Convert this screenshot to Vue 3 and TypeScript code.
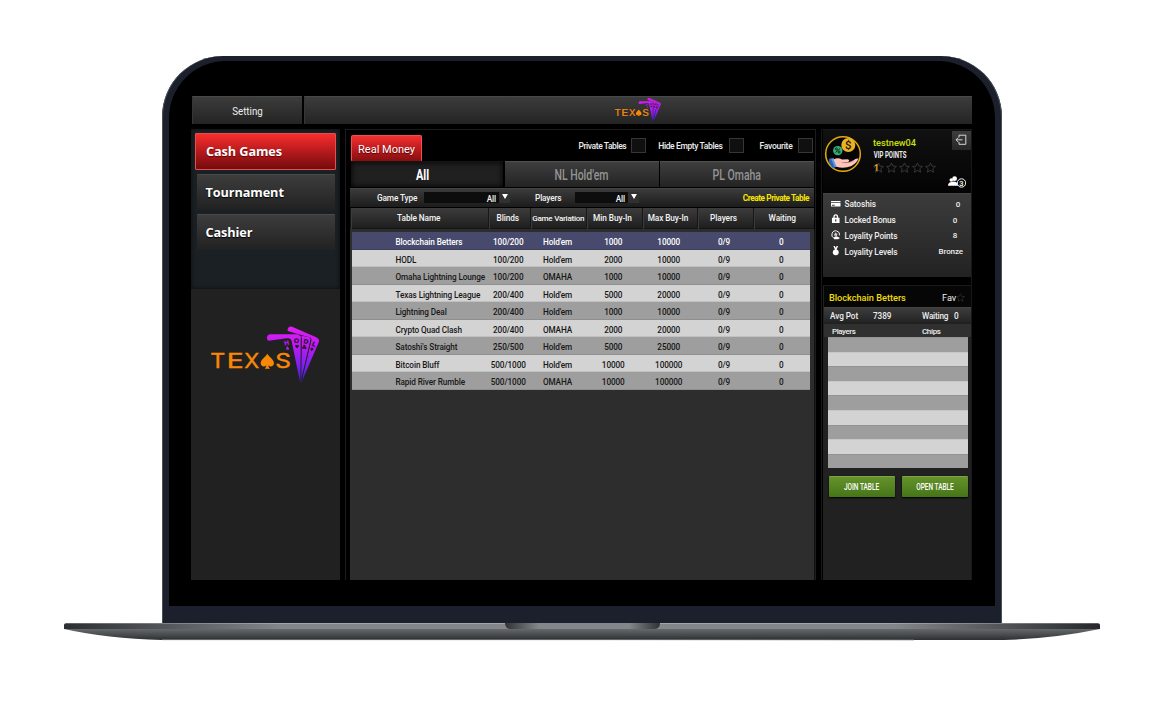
<script setup lang="ts">
interface PokerTable {
  name: string
  blinds: string
  variation: string
  min: string
  max: string
}

const tables: PokerTable[] = [
  { name: 'Blockchain Betters', blinds: '100/200', variation: "Hold'em", min: '1000', max: '10000' },
  { name: 'HODL', blinds: '100/200', variation: "Hold'em", min: '2000', max: '10000' },
  { name: 'Omaha Lightning Lounge', blinds: '100/200', variation: 'OMAHA', min: '1000', max: '10000' },
  { name: 'Texas Lightning League', blinds: '200/400', variation: "Hold'em", min: '5000', max: '20000' },
  { name: 'Lightning Deal', blinds: '200/400', variation: "Hold'em", min: '1000', max: '10000' },
  { name: 'Crypto Quad Clash', blinds: '200/400', variation: 'OMAHA', min: '2000', max: '20000' },
  { name: "Satoshi's Straight", blinds: '250/500', variation: "Hold'em", min: '5000', max: '25000' },
  { name: 'Bitcoin Bluff', blinds: '500/1000', variation: "Hold'em", min: '10000', max: '100000' },
  { name: 'Rapid River Rumble', blinds: '500/1000', variation: 'OMAHA', min: '10000', max: '100000' },
]
const headings: string[] = ['Table Name', 'Blinds', 'Game Variation', 'Min Buy-In', 'Max Buy-In', 'Players', 'Waiting']
const star = 'M5 .8 6.3 3.7 9.5 4 7.1 6.1 7.8 9.3 5 7.6 2.2 9.3 2.9 6.1 .5 4 3.7 3.7Z'
</script>

<template>
  <div class="stage">
    <svg class="defs" width="0" height="0" aria-hidden="true">
      <defs>
        <linearGradient id="cardFill" gradientUnits="userSpaceOnUse" x1="0" y1="35" x2="0" y2="205">
          <stop offset="0" stop-color="#e41cf6" />
          <stop offset=".35" stop-color="#bb1bf2" />
          <stop offset=".7" stop-color="#7a20ee" />
          <stop offset="1" stop-color="#3a1ad0" />
        </linearGradient>
        <symbol id="brand" viewBox="0 0 390 240">
          <g fill="#f88806" stroke="#f88806" stroke-width="1.2" font-family="Inter, sans-serif" font-size="60">
            <text x="31" y="159" textLength="45" lengthAdjust="spacingAndGlyphs">T</text>
            <text x="80" y="159" textLength="51" lengthAdjust="spacingAndGlyphs">E</text>
            <text x="133" y="159" textLength="45" lengthAdjust="spacingAndGlyphs">X</text>
            <text x="226" y="159" textLength="47" lengthAdjust="spacingAndGlyphs">S</text>
          </g>
          <path fill="#f88806" d="M202 116C208 127 222 133 222 145C222 154 211 158 205 151Q205 158 210 161H194Q199 158 199 151C193 158 182 154 182 145C182 133 196 127 202 116Z" />
          <g fill="url(#cardFill)">
            <path d="M201 66Q202 59 211 58L292 58Q304 61 304 72L301 205L275 79Q273 68 260 70L206 77Q200 76 201 66Z" />
            <path d="M262 45L266 37Q269 33 276 35L347 66Q359 71 357 80L303 205L334 74Q335 66 322 65L265 49Z" />
            <path d="M304 62L325 66Q333 68 331 77L302 203L306 72Z" />
            <path d="M303 70L303 200" stroke="#212121" stroke-width="2" />
            <path d="M262 93L266 99Q270 105 264 104H260Q256 102 262 93Z" />
          </g>
          <path d="M333 75L305 194" stroke="#212121" stroke-width="2.5" />
          <g font-family="'DejaVu Sans', sans-serif" font-size="19" font-weight="bold">
            <text x="251" y="90" fill="#b51be8" transform="rotate(-14 261 82)">H</text>
            <g fill="#241629">
              <text x="281" y="83">O</text>
              <text x="310" y="86" transform="rotate(10 318 78)">D</text>
              <text x="336" y="94" transform="rotate(22 342 86)">L</text>
              <path d="M291 100Q283 94 286 90Q290 88 291 92Q293 88 297 91Q298 95 291 100Z" />
              <circle cx="313" cy="93" r="3.5" /><circle cx="310" cy="98" r="3.5" /><circle cx="316" cy="99" r="3.5" />
              <path d="M336 97L341 102L335 109L331 102Z" />
            </g>
          </g>
        </symbol>
      </defs>
    </svg>

    <div class="lid">
      <div class="bezel">
        <div class="screen">
          <header class="topbar">
            <div class="setting"><span>Setting</span></div>
            <div class="brandbar"><svg class="logo-small"><use href="#brand" /></svg></div>
          </header>

          <main class="columns">
            <aside class="left">
              <nav class="nav">
                <div class="nav-item active">Cash Games</div>
                <div class="nav-item">Tournament</div>
                <div class="nav-item">Cashier</div>
              </nav>
              <svg class="logo-big"><use href="#brand" /></svg>
            </aside>

            <section class="centre">
              <div class="options">
                <div class="real">Real Money</div>
                <div class="checks">
                  <span class="check c1"><b>Private Tables</b><i></i></span>
                  <span class="check c2"><b>Hide Empty Tables</b><i></i></span>
                  <span class="check c3"><b>Favourite</b><i></i></span>
                </div>
              </div>
              <div class="tabs">
                <div class="tab on"><span>All</span></div>
                <div class="tab"><span>NL Hold'em</span></div>
                <div class="tab"><span>PL Omaha</span></div>
              </div>
              <div class="filters">
                <span class="flabel f1">Game Type</span>
                <span class="select s1"><em>All</em><i></i></span>
                <span class="flabel f2">Players</span>
                <span class="select s2"><em>All</em><i></i></span>
                <span class="create">Create Private Table</span>
              </div>
              <div class="thead">
                <div v-for="(h, i) in headings" :key="h" :class="['th', 'h' + i]">{{ h }}</div>
              </div>
              <div class="tbody">
                <div v-for="(t, i) in tables" :key="t.name" :class="['tr', { selected: i === 0, light: i % 2 === 1 }]">
                  <span class="name">{{ t.name }}</span>
                  <span>{{ t.blinds }}</span>
                  <span>{{ t.variation }}</span>
                  <span>{{ t.min }}</span>
                  <span>{{ t.max }}</span>
                  <span>0/9</span>
                  <span>0</span>
                </div>
              </div>
            </section>

            <aside class="right">
              <div class="profile">
                <svg class="avatar" viewBox="0 0 38 38">
                  <circle cx="19" cy="19" r="17.3" fill="#050505" stroke="#e3aa10" stroke-width="1.5" />
                  <path d="M5 24L9.5 23L13 31.5L9 33Q4 28 5 24Z" fill="#5299ed" />
                  <path d="M5 24L7 23.5L10.5 32L9 33Q4 28 5 24Z" fill="#2864bd" />
                  <path d="M9.5 24.5Q14 22 18 24.5L24 24.3Q26.5 25.7 24 27L20 27.5Q25 28 29 25.5Q32 23 34.5 23.5Q33 27.5 27.5 31Q20 34 12.5 31.8Z" fill="#ffc5bd" />
                  <path d="M18 27.6H23Q27 27.5 30 25.4" fill="none" stroke="#9d5f62" stroke-width=".6" />
                  <circle cx="13.8" cy="15.6" r="4.7" fill="#35ad76" />
                  <path d="M11.5 17.5L16 13.5" stroke="#11301f" stroke-width="1" />
                  <circle cx="12.4" cy="14" r="1" fill="none" stroke="#11301f" /><circle cx="15.1" cy="17" r="1" fill="none" stroke="#11301f" />
                  <circle cx="24.3" cy="10" r="7" fill="#eab225" />
                  <text x="24.3" y="14" text-anchor="middle" font-family="Roboto, sans-serif" font-size="11.5" font-weight="500" fill="#1d1908">$</text>
                </svg>
                <div class="who">
                  <div class="user">testnew04</div>
                  <div class="vip">VIP POINTS</div>
                  <div class="stars">
                    <svg v-for="n in 5" :key="n" viewBox="0 0 10 10"><path :d="star" fill="none" stroke="#3d3d3d" stroke-width=".8" /></svg>
                    <b>1</b>
                  </div>
                </div>
                <div class="side">
                  <div class="exit">
                    <svg viewBox="0 0 12 12"><path d="M4 3.5V1.2H10.8V10.3H4V8M1 5.8H7.5M3.2 3.7L1 5.8L3.2 8" fill="none" stroke="#d5d5d5" stroke-width="1" /></svg>
                  </div>
                  <svg class="people" viewBox="0 0 18 12">
                    <circle cx="6.6" cy="2.7" r="2.4" fill="#fff" /><circle cx="3.3" cy="4" r="1.8" fill="#fff" />
                    <path d="M0 9.8Q0 6 4 6L5 5.5Q10 5.5 10 9.8Z" fill="#fff" />
                    <circle cx="13.5" cy="7" r="4.2" fill="#0a0a0a" stroke="#f4f4f4" stroke-width="1" />
                    <text x="13.5" y="9.7" text-anchor="middle" font-family="Roboto, sans-serif" font-size="7.5" font-weight="500" fill="#fff">3</text>
                  </svg>
                </div>
              </div>

              <div class="stats">
                <div class="stat">
                  <svg viewBox="0 0 10 10"><path d="M0 2H10V3.3H0ZM0 4.3H10V8H0ZM1 6V7H4V6Z" fill="#fff" fill-rule="evenodd" /></svg>
                  <b>Satoshis</b><i>0</i>
                </div>
                <div class="stat">
                  <svg viewBox="0 0 10 10"><path d="M1 4H2.5V3Q2.5 .3 5 .3T7.5 3V4H9V9.6H1ZM3.9 4H6.1V3Q6.1 1.7 5 1.7T3.9 3ZM4.4 5.6V8H5.6V5.6Z" fill="#fff" fill-rule="evenodd" /></svg>
                  <b>Locked Bonus</b><i class="near">0</i>
                </div>
                <div class="stat">
                  <svg viewBox="0 0 10 10"><path d="M3 8.6A4.1 4.1 0 1 1 9 5.7" fill="none" stroke="#fff" stroke-width="1" /><path d="M5 2.2L5.8 4H7.4L6.2 5.1L6.6 6.7L5 5.8L3.4 6.7L3.8 5.1L2.6 4H4.2Z" fill="#ddd" /><path d="M3 8Q5 6 7 7L9.5 8.3L7.5 9.8H3Z" fill="#fff" /></svg>
                  <b>Loyality Points</b><i class="near">8</i>
                </div>
                <div class="stat">
                  <svg viewBox="0 0 10 10"><path d="M2.5 0H4L5 1.8L6 0H7.5L5.9 3.8Q8.2 4.6 8.2 6.7Q8 9.8 5 9.8T1.8 6.7Q1.8 4.6 4.1 3.8Z" fill="#fff" /></svg>
                  <b>Loyality Levels</b><i class="bronze">Bronze</i>
                </div>
              </div>

              <div class="detail">
                <div class="dtitle"><b>Blockchain Betters</b><span>Fav</span><svg viewBox="0 0 10 10"><path :d="star" fill="none" stroke="#303030" stroke-width=".8" /></svg></div>
                <div class="dinfo"><span class="avg">Avg Pot</span><span class="pot">7389</span><span class="wait">Waiting</span><span>0</span></div>
                <div class="dhead"><span>Players</span><span>Chips</span></div>
                <div class="slots"><div v-for="n in 9" :key="n" class="slot"></div></div>
                <div class="actions"><div><span>JOIN TABLE</span></div><div><span>OPEN TABLE</span></div></div>
              </div>
            </aside>
          </main>
        </div>
      </div>
    </div>

    <svg class="base" viewBox="0 0 1036 18">
      <defs>
        <linearGradient id="deck" x1="0" x2="1">
          <stop offset="0" stop-color="#2c2e32" /><stop offset=".06" stop-color="#44474b" />
          <stop offset=".21" stop-color="#83878b" /><stop offset=".8" stop-color="#83878b" />
          <stop offset=".93" stop-color="#464a4d" /><stop offset="1" stop-color="#27282c" />
        </linearGradient>
        <linearGradient id="under" x1="0" x2="0" y1="0" y2="1">
          <stop offset="0" stop-color="#65696c" /><stop offset=".5" stop-color="#4a4d50" /><stop offset="1" stop-color="#2d2f32" />
        </linearGradient>
        <linearGradient id="notch" x1="0" x2="1">
          <stop offset="0" stop-color="#303235" /><stop offset=".22" stop-color="#83878b" />
          <stop offset=".8" stop-color="#83878b" /><stop offset="1" stop-color="#303235" />
        </linearGradient>
      </defs>
      <path d="M0 6H1036Q990 15.5 940 17H98Q43 15.5 0 6Z" fill="url(#under)" />
      <path d="M98 16.7H540L850 17" stroke="#8b8f91" stroke-width=".7" fill="none" />
      <path d="M0 2Q0 .3 2 .3H1034Q1036 .3 1036 2V6H0Z" fill="url(#deck)" />
      <path d="M441 0H596Q596 6 590 6H447Q441 6 441 0Z" fill="url(#notch)" />
    </svg>
  </div>
</template>

<style>
body { margin: 0; background: #fff; }
</style>

<style scoped>
* { box-sizing: border-box; }
.stage { width: 1159px; height: 706px; padding-top: 56px; overflow: hidden; background: #fff; font-family: Roboto, "Liberation Sans", sans-serif; color: #eee; }
.defs { display: block; }
.lid { width: 839.5px; height: 567px; margin-left: 162px; padding: 5px 6.5px 17px 7px; background: #1b202c; border-radius: 61px 61px 0 0; box-shadow: inset 1px 0 #49515b, inset -1px 0 #49515b; }
.bezel { height: 545px; padding: 35px 22px 0; background: #000; border-radius: 57px 57px 0 0; }
.screen { width: 781px; height: 484px; overflow: hidden; }
.base { display: block; width: 1036px; height: 18px; margin-left: 64px; }

.topbar { display: flex; gap: 2px; height: 28px; padding: 0 0 0 1px; }
.setting, .brandbar { background: linear-gradient(#3c3c3c, #242424); border-top: 1px solid #494949; border-left: 1px solid #363636; }
.setting { width: 110px; font-size: 10.5px; line-height: 29px; text-align: center; }
.setting span { display: inline-block; transform: scaleX(.93); }
.brandbar { flex: 1; }
.logo-small { display: block; width: 55.5px; height: 34.2px; margin: -4px 0 0 305px; }

.columns { display: flex; gap: 5px; height: 451px; margin-top: 5px; }
.left { width: 149px; background: #212121; }
.nav { display: flex; flex-direction: column; gap: 4px; height: 160px; padding: 3.5px 4px 0 4px; background: #1b2024; box-shadow: inset 0 0 4px #0a0a0a; }
.nav-item { height: 36px; margin: 0 1px 0 1.5px; padding-left: 9px; background: linear-gradient(#3d3d3d, #212121); border-top: 1px solid #4a4a4a; border-radius: 1px; font-family: "Open Sans", "Noto Sans", sans-serif; font-size: 12.7px; font-weight: 700; line-height: 35px; letter-spacing: -.08px; color: #fff; text-shadow: 0 1px 1px #000; }
.nav-item.active { height: 37px; margin: 0; padding-left: 10px; border: 1px solid #e4504f; background: linear-gradient(#f92d2d, #b61a1d 50%, #740b0c); line-height: 35px; text-shadow: 0 1px 1px #600; }
.logo-big { display: block; width: 130px; height: 80px; margin: 26px 0 0 9px; }

.centre { width: 471px; border: 1px solid #1c1c1c; border-bottom: 0; padding: 0 1px 0 4px; background: #000; }
.options { display: flex; justify-content: space-between; height: 31px; padding: 4.5px 0 0 1px; }
.real { width: 71px; height: 27px; border: 1px solid #f05050; border-bottom-color: #b53030; border-radius: 2px; background: linear-gradient(#f23030, #c01a1d 50%, #850f11); font-size: 11px; line-height: 27px; text-align: center; color: #fff; text-shadow: 0 1px 1px #500; }
.checks { display: flex; padding: 3px .5px 0 0; }
.check { display: flex; gap: 5px; margin-left: 12px; font-size: 8.5px; line-height: 16px; }
.check b { font-weight: 500; white-space: nowrap; text-align: right; }
.check i { width: 15px; height: 15px; border: 1px solid #363636; background: #101010; }
.c1 b { letter-spacing: -.43px; }
.c2 b { letter-spacing: -.38px; margin-right: 2px; }
.c3 b { letter-spacing: -.25px; }
.c3 { margin-left: 15px; margin-right: 1px; }
.tabs { display: flex; gap: 1.5px; height: 26px; padding-left: 1px; }
.tab { width: 154px; border-top: 1px solid #505050; background: linear-gradient(#3e3e3e, #232323); color: #949494; font-size: 14.2px; font-weight: 500; line-height: 26px; text-align: center; }
.tab span { display: inline-block; transform: scaleX(.74); }
.tab.on { width: 152.5px; border-top-color: #151515; background: #202020; box-shadow: inset 0 0 6px #000; color: #fff; padding-right: 10px; }
.tab.on span { transform: scaleX(.77); font-weight: 700; }
.filters { display: flex; align-items: center; height: 19px; margin-top: 1px; background: linear-gradient(#3b3b3b, #1c1c1c); border-top: 1px solid #444; font-size: 8.3px; font-weight: 500; letter-spacing: -.15px; color: #f2f2f2; }
.f1 { width: 74px; padding-left: 27px; white-space: nowrap; }
.f2 { width: 65px; padding-left: 25px; }
.select { display: flex; justify-content: flex-end; align-items: center; height: 11px; margin-top: -2px; background: #0d0d0d; }
.select em { font-style: normal; line-height: 10px; padding-top: 3px; }
.select i { width: 11px; height: 11px; margin-left: 3px; padding: 2px 2.5px; background: #303030; }
.select i::before { content: ""; display: block; border: 3px solid transparent; border-top: 5px solid #fff; border-bottom: 0; }
.s1 { width: 86px; }
.s2 { width: 64px; }
.create { flex: 1; padding-right: 5px; text-align: right; color: #f6e600; letter-spacing: -.45px; font-weight: 700; white-space: nowrap; }
.thead { display: grid; grid-template-columns: 137.5px 42.5px 55.5px 56px 55px 56px 61.5px; height: 21px; margin-top: 1px; border-bottom: 1px solid #151515; background: linear-gradient(#3c3c3c, #1e1e1e); }
.th { padding-right: 3px; border-left: 1px solid #171717; box-shadow: inset 1px 0 #3a3a3a; font-size: 8.3px; font-weight: 500; line-height: 21px; letter-spacing: -.1px; text-align: center; white-space: nowrap; color: #f4f4f4; }
.h0 { padding-right: 1px; }
.h2 { padding-right: 0; font-size: 8.1px; line-height: 20px; letter-spacing: -.27px; }
.h3 { line-height: 20px; }
.tbody { height: 351px; margin-right: -1px; padding: 3px 4px 0 2px; background: #2d2d2d; border-right: 1px solid #111; }
.tr { display: grid; grid-template-columns: 135px 42.5px 56px 55.5px 55.5px 55px 59.5px; height: 17.55px; background: #9e9e9e; border-bottom: 1px solid #8f8f8f; color: #171717; font-size: 8.2px; font-weight: 500; line-height: 20.5px; text-align: center; letter-spacing: -.1px; }
.tr.light { background: #d3d3d3; border-bottom-color: #c1c1c1; }
.tr.selected { background: #474a6c; border-bottom-color: #3e405e; color: #fff; }
.tr .name { padding-left: 43.5px; text-align: left; white-space: nowrap; }

.right { width: 151px; border: 1px solid #181818; border-bottom: 0; padding-left: 1px; background: #000; }
.profile { display: flex; height: 63px; background: linear-gradient(#111, #030303); }
.avatar { width: 38px; height: 38px; margin: 5px 0 0 1px; }
.who { width: 70px; padding: 7px 0 0 11px; }
.user { font-size: 9.2px; line-height: 12px; color: #cbe00a; font-weight: 500; white-space: nowrap; }
.vip { width: 50px; font-size: 8.2px; line-height: 13px; font-weight: 700; white-space: nowrap; transform: scaleX(.74); transform-origin: 0 0; padding-left: 1px; }
.stars { display: flex; gap: 2px; position: relative; }
.stars svg { flex: none; width: 11px; height: 11px; }
.stars b { position: absolute; left: 1px; top: 1px; font-size: 8.5px; line-height: 11px; color: #eba922; }
.side { flex: 1; display: flex; flex-direction: column; align-items: flex-end; }
.exit { width: 19px; height: 19px; padding: 3px; margin-top: 1px; background: linear-gradient(#3d3d3d, #272727); }
.exit svg { display: block; width: 12px; height: 12px; }
.people { width: 18px; height: 12px; margin: 26px 5px 0 0; }
.stats { height: 84px; padding: 1.5px 7px 0 8px; background: linear-gradient(#3c3c3c, #222); border-top: 1px solid #444; }
.stat { display: flex; align-items: center; height: 15.8px; font-size: 8.3px; font-weight: 500; color: #eee; }
.stat svg { width: 9.5px; height: 9.5px; margin-right: 4px; }
.stat b { font-weight: 500; letter-spacing: -.1px; white-space: nowrap; position: relative; top: 1px; }
.stat i { margin-left: auto; width: 12px; text-align: center; font-style: normal; font-size: 8px; letter-spacing: -.1px; position: relative; top: 1px; }
.stat .near { margin-right: 3px; }
.stat .bronze { width: auto; margin-right: 1px; }
.detail { height: 295px; margin-top: 8px; padding: 0 0 0 1px; background: #212121; border-top: 1px solid #1a1a1a; }
.dtitle { display: flex; align-items: center; height: 21px; padding: 1px 0 0 5px; background: #060606; font-size: 9.2px; }
.dtitle b { width: 113px; color: #f1de0b; font-weight: 500; letter-spacing: -.02px; }
.dtitle svg { width: 9px; height: 9px; }
.dinfo { display: flex; height: 17px; padding-left: 6px; background: linear-gradient(#3d3d3d, #202020); border-top: 1px solid #444; font-size: 8.2px; line-height: 16.5px; font-weight: 500; letter-spacing: -.05px; }
.avg { width: 43px; }
.pot { width: 49px; }
.wait { width: 32px; letter-spacing: -.2px; }
.dhead { display: flex; height: 13px; padding-left: 8px; background: #303030; font-size: 8px; line-height: 15px; font-weight: 500; letter-spacing: -.45px; }
.dhead span { flex: none; width: 90px; }
.dhead span + span { width: 40px; letter-spacing: -.35px; }
.slots { margin: 0 3px 0 4px; }
.slot { height: 14.6px; background: #9e9e9e; border-top: 1px solid #939393; }
.slot:nth-child(even) { background: #d3d3d3; border-top-color: #c7c7c7; }
.actions { display: flex; gap: 7px; padding: 7.5px 3px 0 5px; }
.actions div { flex: none; width: 66px; height: 21px; border-radius: 1px; border-top: 1px solid #7ca545; background: linear-gradient(#64932b, #467518); box-shadow: 0 1px 2px #000; font-size: 8.3px; line-height: 21px; font-weight: 500; text-align: center; color: #fff; }
.actions span { display: inline-block; white-space: nowrap; transform: scaleX(.78); }
</style>
